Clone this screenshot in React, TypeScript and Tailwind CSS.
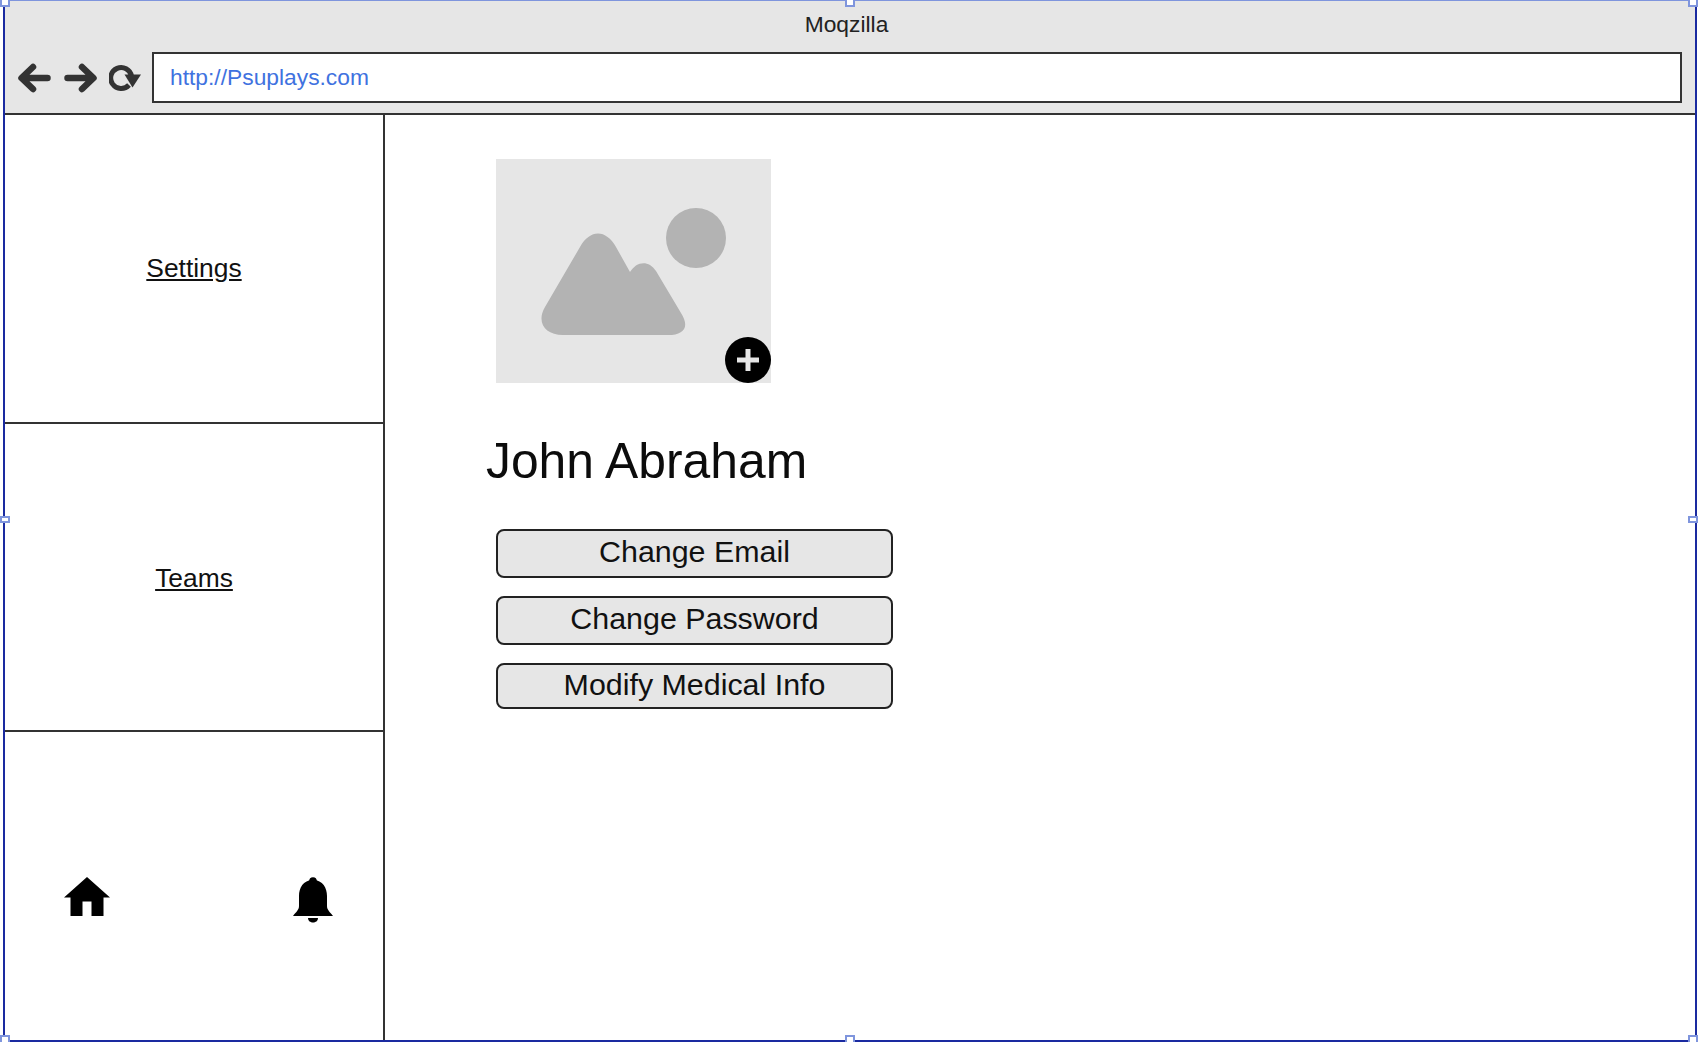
const Handle = ({ className }: { className: string }) => (
  <div className={`absolute h-[7px] w-[10px] border-2 border-[#7f95dd] bg-white ${className}`} />
);

const ArrowLeft = () => (
  <svg width="33" height="30" viewBox="0 0 33 30" fill="none" stroke="#333" strokeWidth="6.500" strokeLinecap="round" strokeLinejoin="round">
    <path d="M29.500 15H4M15 4L3.500 15L15 26" />
  </svg>
);

const ArrowRight = () => (
  <svg width="33" height="30" viewBox="0 0 33 30" fill="none" stroke="#333" strokeWidth="6.500" strokeLinecap="round" strokeLinejoin="round">
    <path d="M3.500 15H29M18 4L29.500 15L18 26" />
  </svg>
);

const Reload = () => (
  <svg width="32" height="28" viewBox="0 0 32 28">
    <path d="M22.500 12A10.500 10.500 0 1 0 20 21" fill="none" stroke="#333" strokeWidth="5" />
    <path d="M15.500 10.500H32L23.500 23.500Z" fill="#333" />
  </svg>
);

const Placeholder = () => (
  <svg width="275" height="224" viewBox="0 0 275 224">
    <rect width="275" height="224" fill="#e6e6e6" />
    <circle cx="200" cy="79" r="30" fill="#b3b3b3" />
    <path
      d="M67 176C49 176 40 163 49 148L84 88C94 70 110 70 120 88L134 113C140 103 152 100 160 112L185 154C194 168 188 176 172 176Z"
      fill="#b3b3b3"
    />
  </svg>
);

const Plus = () => (
  <svg width="46" height="46" viewBox="0 0 46 46">
    <circle cx="23" cy="23" r="23" fill="#000" />
    <path d="M23 12V34M12 23H34" stroke="#e6e6e6" strokeWidth="5" />
  </svg>
);

const Home = () => (
  <svg width="46" height="40" viewBox="0 0 46 40" fill="#000">
    <path d="M23 0L46 20.500H39.500V39H27.500V24.500H18.500V39H6.500V20.500H0Z" />
  </svg>
);

const Bell = () => (
  <svg width="40" height="46" viewBox="0 0 40 46" fill="#000">
    <circle cx="20" cy="4" r="3.800" />
    <path d="M20 3C30 3 34 11 34 19V29C34 33 37 35 40 39H0C3 35 6 33 6 29V19C6 11 10 3 20 3Z" />
    <path d="M15 41H25C25 47 15 47 15 41Z" />
  </svg>
);

const buttons = [
  { label: "Change Email", height: "h-[49px]" },
  { label: "Change Password", height: "h-[49px]" },
  { label: "Modify Medical Info", height: "h-[46px]" },
];

export default function App() {
  return (
    <div className="relative h-[1042px] w-[1698px] overflow-hidden bg-white font-['Liberation_Sans',Arial,sans-serif] text-[#111]">
      <div className="ml-[3px] mr-[1px] flex h-full flex-col border-x-2 border-b-2 border-t border-x-[#1a2aa0] border-b-[#1a2aa0] border-t-[#7f95dd]">
        <header className="h-[114px] shrink-0 border-b-2 border-[#333] bg-[#e6e6e6]">
          <div className="flex h-[46px] items-center justify-center pr-[7px] text-[22.800px] text-[#222]">Moqzilla</div>
          <div className="flex items-center pl-[13px] pr-[13px] pt-[5px]">
            <ArrowLeft />
            <div className="ml-[13px]">
              <ArrowRight />
            </div>
            <div className="ml-[12px]">
              <Reload />
            </div>
            <div className="ml-[11px] flex h-[51px] flex-1 items-center border-2 border-[#333] bg-white pl-[16px] text-[22.800px] text-[#3f72e0]">
              http://Psuplays.com
            </div>
          </div>
        </header>
        <div className="flex min-h-0 flex-1">
          <aside className="flex w-[380px] shrink-0 flex-col border-r-2 border-[#333]">
            <div className="flex h-[309px] items-center justify-center border-b-2 border-[#333] text-[26.400px] underline underline-offset-2">
              Settings
            </div>
            <div className="flex h-[308px] items-center justify-center border-b-2 border-[#333] pt-[4px] text-[26.400px] underline underline-offset-2">
              Teams
            </div>
            <div className="flex flex-1 items-start justify-between pl-[59px] pr-[50px] pt-[145px]">
              <Home />
              <Bell />
            </div>
          </aside>
          <main className="flex-1 pl-[101px] pt-[44px]">
            <div className="relative ml-[10px] h-[224px] w-[275px]">
              <Placeholder />
              <div className="absolute bottom-0 right-0 h-[46px]">
                <Plus />
              </div>
            </div>
            <h1 className="mt-[48px] text-[49.800px] leading-[60px] text-[#0c0c0c]">John Abraham</h1>
            <div className="ml-[10px] mt-[38px] flex w-[397px] flex-col gap-[18px]">
              {buttons.map((b) => (
                <button
                  key={b.label}
                  className={`flex ${b.height} items-center justify-center rounded-[8px] border-2 border-[#222] bg-[#e6e6e6] pb-[3px] text-[30.400px] text-[#111]`}
                >
                  {b.label}
                </button>
              ))}
            </div>
          </main>
        </div>
      </div>
      <Handle className="left-0 top-0 border-t-0" />
      <Handle className="left-[845px] top-0 border-t-0" />
      <Handle className="right-0 top-0 border-t-0" />
      <Handle className="left-0 top-[516px] w-[9px]" />
      <Handle className="right-0 top-[516px] w-[9px]" />
      <Handle className="bottom-0 left-0 border-b-0" />
      <Handle className="bottom-0 left-[845px] border-b-0" />
      <Handle className="bottom-0 right-0 border-b-0" />
    </div>
  );
}
